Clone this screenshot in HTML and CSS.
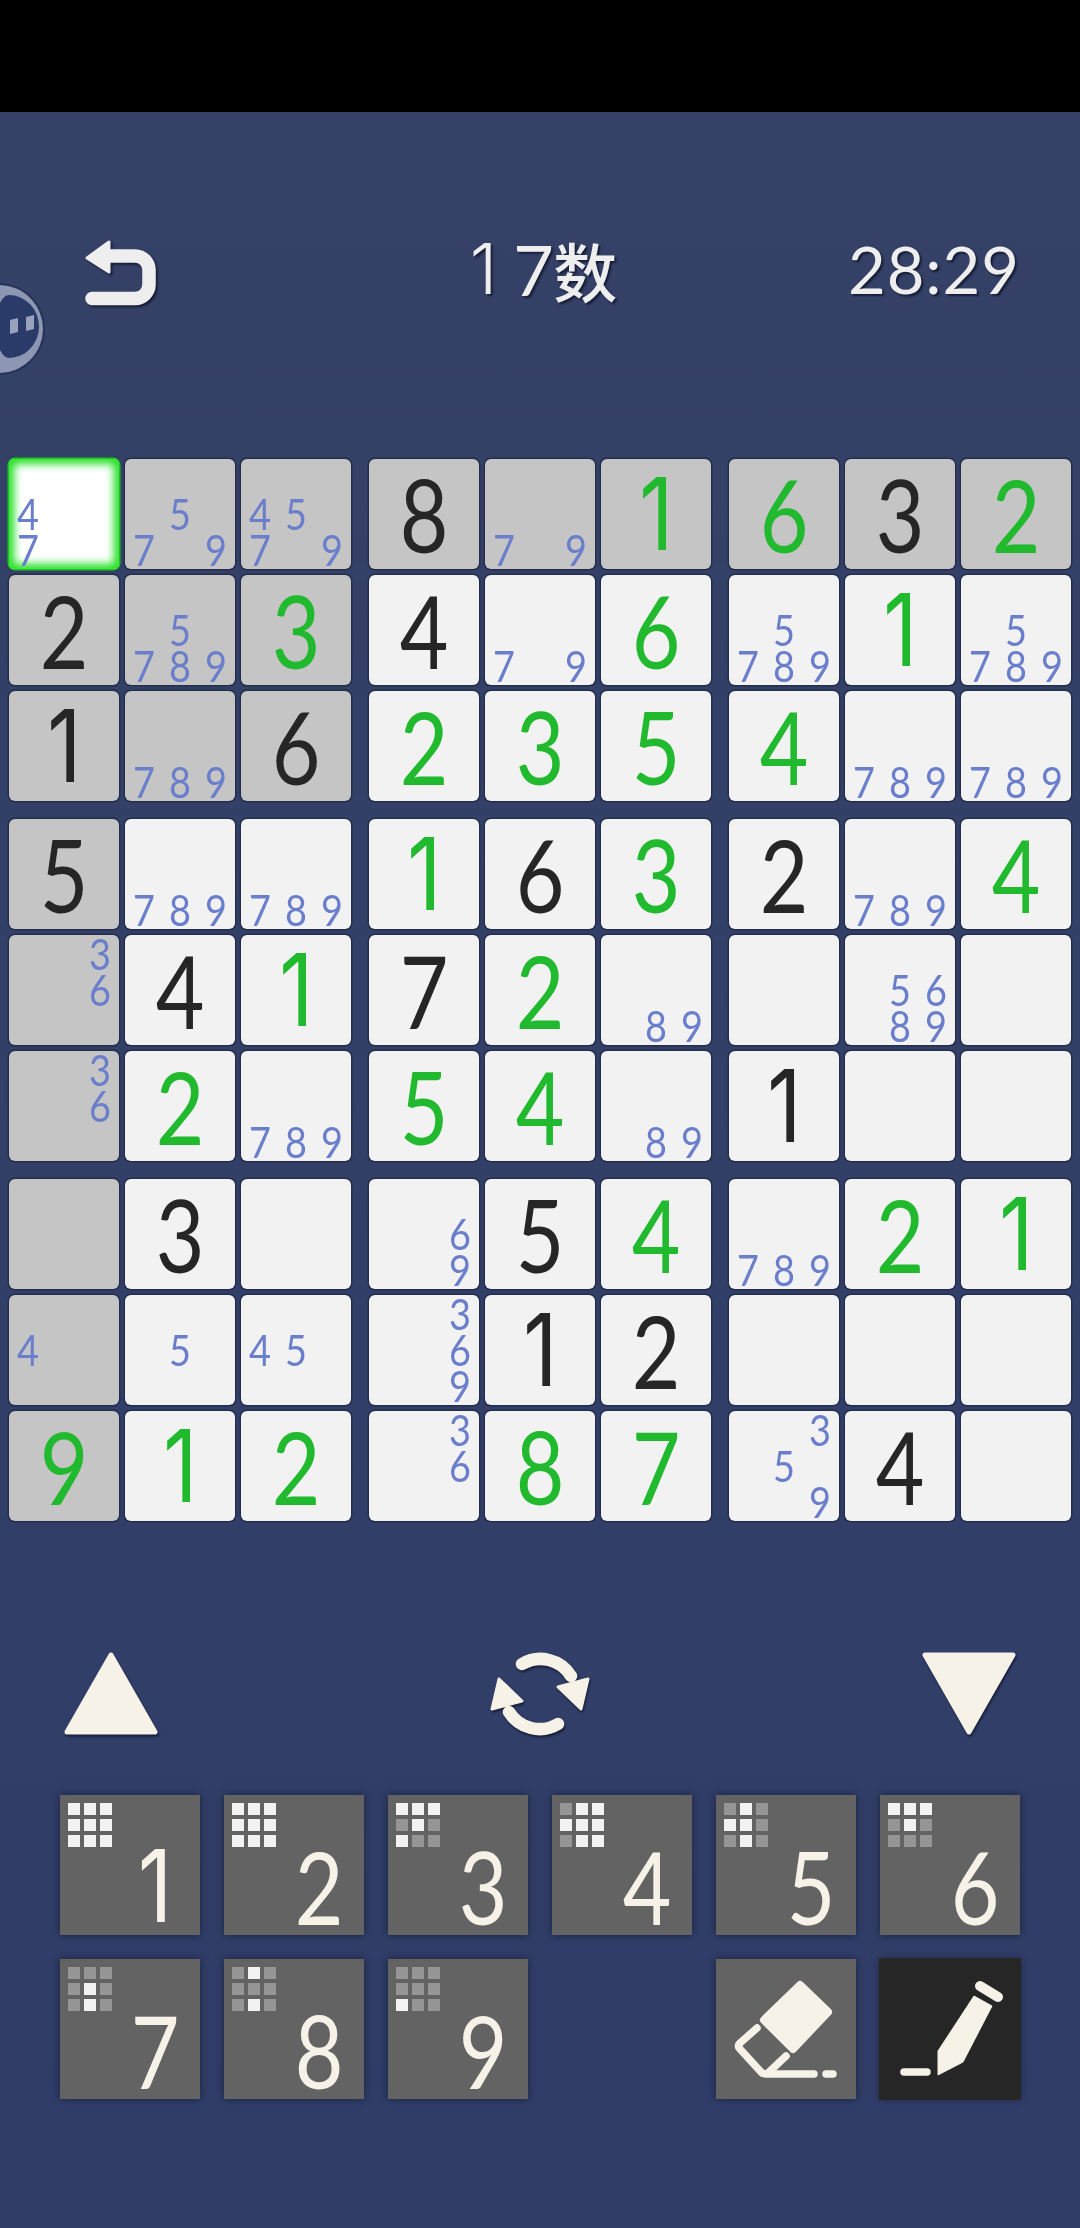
FILE: index.html
```html
<!DOCTYPE html>
<html lang="zh">
<head>
<meta charset="utf-8">
<title>17数</title>
<link rel="stylesheet" href="styles.css">
</head>
<body>
<div class="statusbar"></div>
<svg class="floater" width="48" height="92" viewBox="0 0 48 92">
  <circle cx="-1" cy="46" r="46" fill="#263358"/>
  <circle cx="-1" cy="46" r="44" fill="#8d97b3"/>
  <path d="M0 20Q4 12 9 12A30 31.5 0 0 1 9 75Q4 75 0 67Z" fill="#2b3b69"/>
  <path d="M10 37l8-2v14l-8 2zM26 34l8-2v14l-8 2z" fill="#99a2bc"/>
</svg>
<header class="header">
  <svg class="undo" width="72" height="66" viewBox="0 0 72 66">
    <path class="undo-line" d="M23 16H50a14 14 0 0 1 14 14V44.5a14 14 0 0 1-14 14H7"/>
    <path class="undo-head" d="M2 18L24 2V32Z"/>
  </svg>
  <div class="title"><span class="t1">1</span><span class="t7">7</span><span class="cjk">数</span></div>
  <div class="timer">28:29</div>
</header>
<main class="board">
  <section class="box">
    <div class="cell selected"><span class="note n4">4</span><span class="note n7">7</span></div>
    <div class="cell hl"><span class="note n5">5</span><span class="note n7">7</span><span class="note n9">9</span></div>
    <div class="cell hl"><span class="note n4">4</span><span class="note n5">5</span><span class="note n7">7</span><span class="note n9">9</span></div>
    <div class="cell hl"><span class="big k">2</span></div>
    <div class="cell hl"><span class="note n5">5</span><span class="note n7">7</span><span class="note n8">8</span><span class="note n9">9</span></div>
    <div class="cell hl"><span class="big g">3</span></div>
    <div class="cell hl"><span class="big k one">1</span></div>
    <div class="cell hl"><span class="note n7">7</span><span class="note n8">8</span><span class="note n9">9</span></div>
    <div class="cell hl"><span class="big k">6</span></div>
  </section>
  <section class="box">
    <div class="cell hl"><span class="big k">8</span></div>
    <div class="cell hl"><span class="note n7">7</span><span class="note n9">9</span></div>
    <div class="cell hl"><span class="big g one">1</span></div>
    <div class="cell"><span class="big k">4</span></div>
    <div class="cell"><span class="note n7">7</span><span class="note n9">9</span></div>
    <div class="cell"><span class="big g">6</span></div>
    <div class="cell"><span class="big g">2</span></div>
    <div class="cell"><span class="big g">3</span></div>
    <div class="cell"><span class="big g">5</span></div>
  </section>
  <section class="box">
    <div class="cell hl"><span class="big g">6</span></div>
    <div class="cell hl"><span class="big k">3</span></div>
    <div class="cell hl"><span class="big g">2</span></div>
    <div class="cell"><span class="note n5">5</span><span class="note n7">7</span><span class="note n8">8</span><span class="note n9">9</span></div>
    <div class="cell"><span class="big g one">1</span></div>
    <div class="cell"><span class="note n5">5</span><span class="note n7">7</span><span class="note n8">8</span><span class="note n9">9</span></div>
    <div class="cell"><span class="big g">4</span></div>
    <div class="cell"><span class="note n7">7</span><span class="note n8">8</span><span class="note n9">9</span></div>
    <div class="cell"><span class="note n7">7</span><span class="note n8">8</span><span class="note n9">9</span></div>
  </section>
  <section class="box">
    <div class="cell hl"><span class="big k">5</span></div>
    <div class="cell"><span class="note n7">7</span><span class="note n8">8</span><span class="note n9">9</span></div>
    <div class="cell"><span class="note n7">7</span><span class="note n8">8</span><span class="note n9">9</span></div>
    <div class="cell hl"><span class="note n3">3</span><span class="note n6">6</span></div>
    <div class="cell"><span class="big k">4</span></div>
    <div class="cell"><span class="big g one">1</span></div>
    <div class="cell hl"><span class="note n3">3</span><span class="note n6">6</span></div>
    <div class="cell"><span class="big g">2</span></div>
    <div class="cell"><span class="note n7">7</span><span class="note n8">8</span><span class="note n9">9</span></div>
  </section>
  <section class="box">
    <div class="cell"><span class="big g one">1</span></div>
    <div class="cell"><span class="big k">6</span></div>
    <div class="cell"><span class="big g">3</span></div>
    <div class="cell"><span class="big k">7</span></div>
    <div class="cell"><span class="big g">2</span></div>
    <div class="cell"><span class="note n8">8</span><span class="note n9">9</span></div>
    <div class="cell"><span class="big g">5</span></div>
    <div class="cell"><span class="big g">4</span></div>
    <div class="cell"><span class="note n8">8</span><span class="note n9">9</span></div>
  </section>
  <section class="box">
    <div class="cell"><span class="big k">2</span></div>
    <div class="cell"><span class="note n7">7</span><span class="note n8">8</span><span class="note n9">9</span></div>
    <div class="cell"><span class="big g">4</span></div>
    <div class="cell"></div>
    <div class="cell"><span class="note n5">5</span><span class="note n6">6</span><span class="note n8">8</span><span class="note n9">9</span></div>
    <div class="cell"></div>
    <div class="cell"><span class="big k one">1</span></div>
    <div class="cell"></div>
    <div class="cell"></div>
  </section>
  <section class="box">
    <div class="cell hl"></div>
    <div class="cell"><span class="big k">3</span></div>
    <div class="cell"></div>
    <div class="cell hl"><span class="note n4">4</span></div>
    <div class="cell"><span class="note n5">5</span></div>
    <div class="cell"><span class="note n4">4</span><span class="note n5">5</span></div>
    <div class="cell hl"><span class="big g">9</span></div>
    <div class="cell"><span class="big g one">1</span></div>
    <div class="cell"><span class="big g">2</span></div>
  </section>
  <section class="box">
    <div class="cell"><span class="note n6">6</span><span class="note n9">9</span></div>
    <div class="cell"><span class="big k">5</span></div>
    <div class="cell"><span class="big g">4</span></div>
    <div class="cell"><span class="note n3">3</span><span class="note n6">6</span><span class="note n9">9</span></div>
    <div class="cell"><span class="big k one">1</span></div>
    <div class="cell"><span class="big k">2</span></div>
    <div class="cell"><span class="note n3">3</span><span class="note n6">6</span></div>
    <div class="cell"><span class="big g">8</span></div>
    <div class="cell"><span class="big g">7</span></div>
  </section>
  <section class="box">
    <div class="cell"><span class="note n7">7</span><span class="note n8">8</span><span class="note n9">9</span></div>
    <div class="cell"><span class="big g">2</span></div>
    <div class="cell"><span class="big g one">1</span></div>
    <div class="cell"></div>
    <div class="cell"></div>
    <div class="cell"></div>
    <div class="cell"><span class="note n3">3</span><span class="note n5">5</span><span class="note n9">9</span></div>
    <div class="cell"><span class="big k">4</span></div>
    <div class="cell"></div>
  </section>
</main>
<nav class="arrows">
  <svg class="tool" width="94" height="84" viewBox="0 0 94 84"><path class="tri" d="M3 80L47 3L91 80Z"/></svg>
  <svg class="tool" width="100" height="84" viewBox="0 0 100 84">
    <path class="spin" d="M32 12A36 36 0 0 1 81 24"/>
    <path class="spin" d="M68 72A36 36 0 0 1 19 60"/>
    <path class="tip" d="M98 27L91 57L68 35Z"/>
    <path class="tip" d="M2 57L9 27L32 49Z"/>
  </svg>
  <svg class="tool" width="94" height="84" viewBox="0 0 94 84"><path class="tri" d="M3 3H91L47 80Z"/></svg>
</nav>
<section class="keypad">
  <button class="key"><span class="mini"><i class="on"></i><i class="on"></i><i class="on"></i><i class="on"></i><i class="on"></i><i class="on"></i><i class="on"></i><i class="on"></i><i class="on"></i></span><span class="kd one">1</span></button>
  <button class="key"><span class="mini"><i class="on"></i><i class="on"></i><i class="on"></i><i class="on"></i><i class="on"></i><i class="on"></i><i class="on"></i><i class="on"></i><i class="on"></i></span><span class="kd">2</span></button>
  <button class="key"><span class="mini"><i class="on"></i><i class="on"></i><i class="on"></i><i></i><i class="on"></i><i></i><i class="on"></i><i></i><i></i></span><span class="kd">3</span></button>
  <button class="key"><span class="mini"><i></i><i class="on"></i><i class="on"></i><i class="on"></i><i class="on"></i><i class="on"></i><i></i><i class="on"></i><i class="on"></i></span><span class="kd">4</span></button>
  <button class="key"><span class="mini"><i></i><i class="on"></i><i></i><i class="on"></i><i class="on"></i><i></i><i></i><i class="on"></i><i></i></span><span class="kd">5</span></button>
  <button class="key"><span class="mini"><i class="on"></i><i class="on"></i><i class="on"></i><i></i><i class="on"></i><i></i><i></i><i></i><i></i></span><span class="kd">6</span></button>
  <button class="key"><span class="mini"><i></i><i></i><i></i><i></i><i class="on"></i><i></i><i></i><i class="on"></i><i></i></span><span class="kd">7</span></button>
  <button class="key"><span class="mini"><i></i><i class="on"></i><i></i><i></i><i></i><i></i><i></i><i class="on"></i><i></i></span><span class="kd">8</span></button>
  <button class="key"><span class="mini"><i></i><i></i><i></i><i></i><i></i><i></i><i class="on"></i><i></i><i></i></span><span class="kd">9</span></button>
  <div class="spacer"></div>
  <button class="key">
    <svg class="glyph" width="140" height="140" viewBox="0 0 140 140">
      <path class="fill" d="M84 26L112 53L77 90L48 61Z"/>
      <path class="line" d="M41 69L24 84Q21 87 24 90L45 113Q47 115 50 115H98"/>
      <path class="line" d="M70 97L52 114"/>
      <path class="line" d="M110 115H117"/>
    </svg>
  </button>
  <button class="key dark">
    <svg class="glyph" width="140" height="140" viewBox="0 0 140 140">
      <path class="line" d="M24 113H47"/>
      <path class="pen" d="M58 92L94 37L112 47L83 103L58 116Z"/>
      <path class="line cap" d="M100 27L118 38"/>
    </svg>
  </button>
</section>
</body>
</html>
```
FILE: styles.css
```css
* { box-sizing: border-box; }
html, body { margin: 0; padding: 0; }
body {
  width: 1080px;
  height: 2228px;
  overflow: hidden;
  position: relative;
  background: linear-gradient(#354166, #303d68);
  font-family: Lato, "Noto Sans CJK SC", sans-serif;
}
.statusbar { height: 112px; background: #000; }
.floater { position: absolute; left: 0; top: 283px; }
.header {
  height: 347px;
  padding: 122px 60px 0 63px;
  display: grid;
  grid-template-columns: 1fr auto 1fr;
  align-items: start;
  color: #eeeeee;
}
.undo { margin: 6px 0 0 22px; filter: drop-shadow(2px 2px 1px rgba(10,15,35,.7)); }
.undo-line { fill: none; stroke: #eeeeee; stroke-width: 13.5; stroke-linecap: round; }
.undo-head { fill: #eeeeee; stroke: #eeeeee; stroke-width: 3; stroke-linejoin: round; }
.title, .timer {
  font-weight: 400;
  text-shadow: 2px 2px 2px rgba(10,15,35,.7);
}
.title {
  font-size: 70px;
  line-height: 70px;
  display: flex;
  align-items: center;
  margin-left: 4px;
}
.t1 { font-family: Inter, sans-serif; font-weight: 300; margin-right: 16px; }
.t7 { display: inline-block; width: 36px; }
.cjk {
  font-family: "Noto Sans CJK SC", sans-serif;
  font-size: 64px;
  font-weight: 500;
  margin-left: 4px;
}
.timer {
  justify-self: end;
  font-size: 65px;
  line-height: 70px;
  letter-spacing: 1px;
}
.board {
  width: 1062px;
  margin: 0 auto;
  display: grid;
  grid-template-columns: repeat(3, 342px);
  gap: 18px;
}
.box {
  display: grid;
  grid-template-columns: repeat(3, 110px);
  grid-template-rows: repeat(3, 110px);
  gap: 6px;
}
.cell {
  position: relative;
  width: 110px;
  height: 110px;
  padding: 1px;
  display: grid;
  grid-template-columns: repeat(3, 36px);
  grid-template-rows: repeat(3, 36px);
  background: #f2f2f2;
  border-radius: 6px;
  box-shadow: 0 0 0 1.5px #242e4c;
}
.cell.hl { background: #c5c5c5; }
.cell.selected {
  background: #fff;
  box-shadow: 0 0 0 1.5px #1cc51c, inset 0 0 8px 5px #22e022;
}
.big {
  grid-column: 1 / 4;
  grid-row: 1 / 4;
  place-self: center;
  font-size: 100px;
  line-height: 102px;
  transform: scaleX(.84);
}
.one { font-family: Inter, sans-serif; }
.big.g { color: #21b92d; }
.big.k { color: #262626; }
.note {
  font-size: 43px;
  font-weight: 400;
  line-height: 36px;
  text-align: center;
  color: #6a7ecb;
  transform: scaleX(.88);
}
.n1, .n4, .n7 { grid-column: 1; }
.n2, .n5, .n8 { grid-column: 2; }
.n3, .n6, .n9 { grid-column: 3; }
.n1, .n2, .n3 { grid-row: 1; }
.n4, .n5, .n6 { grid-row: 2; }
.n7, .n8, .n9 { grid-row: 3; }
.arrows {
  margin-top: 131px;
  padding: 0 64px;
  height: 84px;
  display: flex;
  justify-content: space-between;
}
.tool { filter: drop-shadow(1px 2px 1px rgba(10,15,35,.7)); }
.tri { fill: #f6f2e8; stroke: #f6f2e8; stroke-width: 5; stroke-linejoin: round; }
.spin { fill: none; stroke: #f6f2e8; stroke-width: 12.5; stroke-linecap: round; }
.tip { fill: #f6f2e8; stroke: #f6f2e8; stroke-width: 3; stroke-linejoin: round; }
.keypad {
  margin-top: 59px;
  padding-left: 60px;
  display: grid;
  grid-template-columns: repeat(6, 140px);
  grid-template-rows: repeat(2, 140px);
  gap: 24px;
}
.spacer { visibility: hidden; }
.key {
  display: grid;
  grid-template: 140px / 140px;
  width: 140px;
  height: 140px;
  padding: 0;
  border: 0;
  background: #636363;
  box-shadow: 0 0 8px rgba(15,20,40,.65);
  font: inherit;
  color: #f6f2e8;
}
.key.dark { background: #262626; box-shadow: 0 0 0 1px #262626, 0 0 8px rgba(15,20,40,.65); }
.mini {
  grid-area: 1 / 1;
  align-self: start;
  justify-self: start;
  margin: 8px;
  display: grid;
  grid-template-columns: repeat(3, 12px);
  grid-auto-rows: 12px;
  gap: 4px;
}
.mini i { background: #959595; }
.mini i.on { background: #f2f2f2; }
.kd {
  grid-area: 1 / 1;
  margin: 36px 0 0 40px;
  width: 110px;
  height: 110px;
  font-size: 100px;
  font-weight: 400;
  line-height: 110px;
  text-align: center;
  transform: scaleX(.84);
}
.kd.one { font-family: Inter, sans-serif; }
.glyph { grid-area: 1 / 1; }
.fill, .pen { fill: #f6f2e8; stroke: #f6f2e8; stroke-linejoin: round; }
.fill { stroke-width: 8; }
.pen { stroke-width: 1; }
.line { fill: none; stroke: #f6f2e8; stroke-width: 7.5; stroke-linejoin: round; stroke-linecap: round; }
.line.cap { stroke-width: 10; }
```
